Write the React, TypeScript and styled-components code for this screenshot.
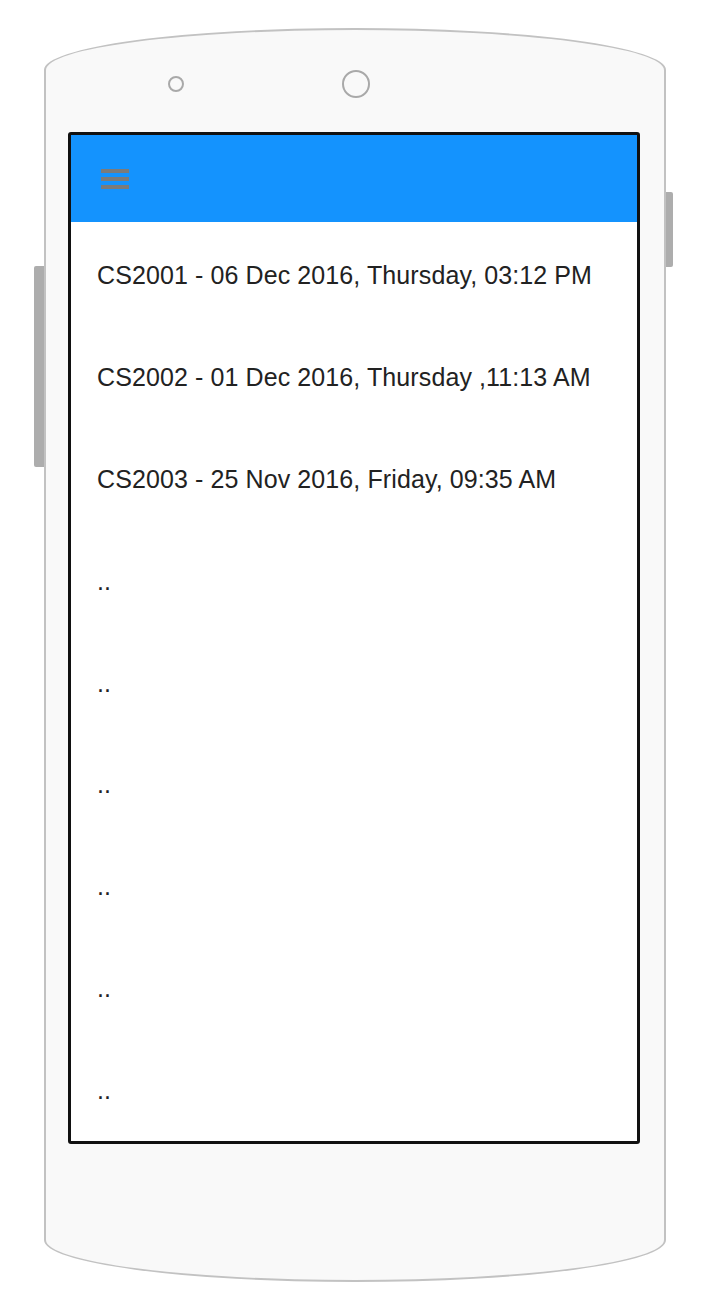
import * as React from "react"
import styled, { createGlobalStyle } from "styled-components"

const GlobalStyle = createGlobalStyle`
  html, body {
    margin: 0;
    padding: 0;
    background: #ffffff;
  }
  body {
    font-family: "Liberation Sans", Arial, sans-serif;
  }
`

const entries = [
  "CS2001 - 06 Dec 2016, Thursday, 03:12 PM",
  "CS2002 - 01 Dec 2016, Thursday ,11:13 AM",
  "CS2003 - 25 Nov 2016, Friday, 09:35 AM",
  "..",
  "..",
  "..",
  "..",
  "..",
  "..",
]

const Page = styled.div`
  display: flex;
  align-items: flex-start;
  padding: 28px 0 0 34px;
`

const SideKey = styled.div<{ $side: "left" | "right"; $top: number; $length: number; $thickness: number }>`
  flex: none;
  width: ${(p) => p.$thickness}px;
  height: ${(p) => p.$length}px;
  margin-top: ${(p) => p.$top}px;
  background: #adadad;
  border-radius: ${(p) => (p.$side === "left" ? "2px 0 0 2px" : "0 2px 2px 0")};
`

const PhoneBody = styled.div`
  flex: none;
  box-sizing: border-box;
  width: 622px;
  height: 1254px;
  border: 2px solid #c2c2c2;
  border-radius: 50% / 42px;
  background: #f9f9f9;
  display: flex;
  flex-direction: column;
  padding-left: 22px;
`

const Sensors = styled.div`
  display: flex;
  align-items: center;
  height: 28px;
  margin-top: 40px;
  padding-left: 100px;
  gap: 158px;
`

const Lens = styled.div<{ $size: number }>`
  box-sizing: border-box;
  width: ${(p) => p.$size}px;
  height: ${(p) => p.$size}px;
  border: 2px solid #a9a9a9;
  border-radius: 50%;
`

const Screen = styled.div`
  box-sizing: border-box;
  width: 572px;
  height: 1012px;
  margin-top: 34px;
  border: 3px solid #111111;
  border-radius: 3px;
  background: #ffffff;
  display: flex;
  flex-direction: column;
  overflow: hidden;
`

const AppBar = styled.div`
  flex: none;
  height: 87px;
  background: #1493fe;
  display: flex;
  align-items: center;
  padding-left: 30px;
`

const MenuButton = styled.div`
  display: flex;
  flex-direction: column;
  gap: 4px;
  width: 28px;
`

const MenuLine = styled.span`
  display: block;
  height: 4px;
  background: #7b7b7b;
`

const List = styled.div`
  flex: 1;
  display: flex;
  flex-direction: column;
  padding-top: 3px;
`

const Row = styled.div`
  flex: 1;
  display: flex;
  align-items: center;
  padding-left: 26px;
  font-size: 25px;
  letter-spacing: 0.1px;
  color: #222222;
  white-space: nowrap;
`

export default function App() {
  return (
    <>
      <GlobalStyle />
      <Page>
        <SideKey $side="left" $top={238} $length={201} $thickness={10} />
        <PhoneBody>
          <Sensors>
            <Lens $size={16} />
            <Lens $size={28} />
          </Sensors>
          <Screen>
            <AppBar>
              <MenuButton>
                <MenuLine />
                <MenuLine />
                <MenuLine />
              </MenuButton>
            </AppBar>
            <List>
              {entries.map((text, i) => (
                <Row key={i}>{text}</Row>
              ))}
            </List>
          </Screen>
        </PhoneBody>
        <SideKey $side="right" $top={164} $length={75} $thickness={7} />
      </Page>
    </>
  )
}
